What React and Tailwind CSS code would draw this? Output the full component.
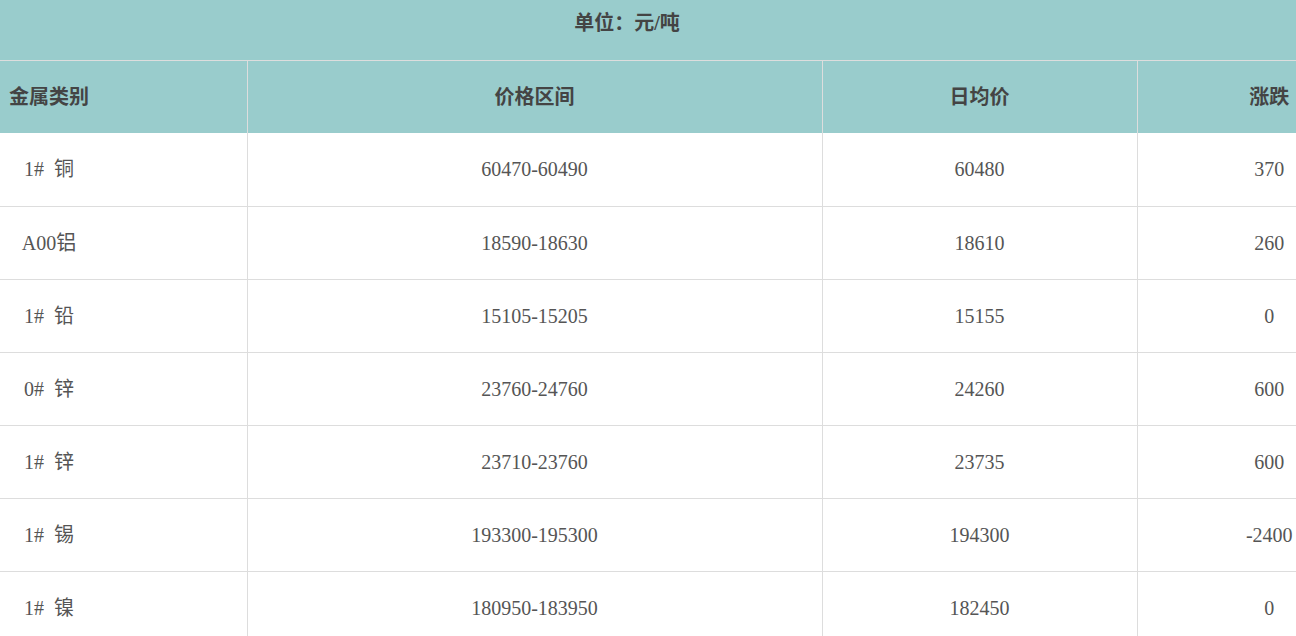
import React from 'react'

const rows = [
  ['1# 铜', '60470-60490', '60480', '370'],
  ['A00铝', '18590-18630', '18610', '260'],
  ['1# 铅', '15105-15205', '15155', '0'],
  ['0# 锌', '23760-24760', '24260', '600'],
  ['1# 锌', '23710-23760', '23735', '600'],
  ['1# 锡', '193300-195300', '194300', '-2400'],
  ['1# 镍', '180950-183950', '182450', '0'],
]

function App() {
  return (
    <div
      className="w-screen h-screen overflow-hidden bg-white"
      style={{ fontFamily: '"Liberation Serif", "Noto Sans CJK SC", serif' }}
    >
      <div className="w-[1401px]">
        <div className="h-[61px] bg-[#99cccc] border-b border-[#dddddd]">
          <div className="w-[1254px] pt-[9px] text-center text-[20px] leading-[28px] font-bold text-[#444444]">
            单位：元/吨
          </div>
        </div>

        <table className="w-[1401px] table-fixed border-collapse">
          <colgroup>
            <col className="w-[247px]" />
            <col className="w-[575px]" />
            <col className="w-[315px]" />
            <col className="w-[264px]" />
          </colgroup>
          <thead>
            <tr className="h-[72px] bg-[#99cccc] text-[20px] font-bold text-[#444444]">
              <th className="border-r border-[#dddddd] p-0 font-bold">
                <div className="w-[98px] text-center">金属类别</div>
              </th>
              <th className="border-r border-[#dddddd] p-0 font-bold text-center">价格区间</th>
              <th className="border-r border-[#dddddd] p-0 font-bold text-center">日均价</th>
              <th className="p-0 font-bold text-center">涨跌</th>
            </tr>
          </thead>
          <tbody>
            {rows.map((r) => (
              <tr key={r[0] + r[1]} className="h-[73px] border-b border-[#dddddd] text-[20px] text-[#555555]">
                <td className="border-r border-[#dddddd] p-0">
                  <div className="w-[98px] text-center [word-spacing:5px]">{r[0]}</div>
                </td>
                <td className="border-r border-[#dddddd] p-0 text-center">{r[1]}</td>
                <td className="border-r border-[#dddddd] p-0 text-center">{r[2]}</td>
                <td className="p-0 text-center">{r[3]}</td>
              </tr>
            ))}
          </tbody>
        </table>
      </div>
    </div>
  )
}

export default App
